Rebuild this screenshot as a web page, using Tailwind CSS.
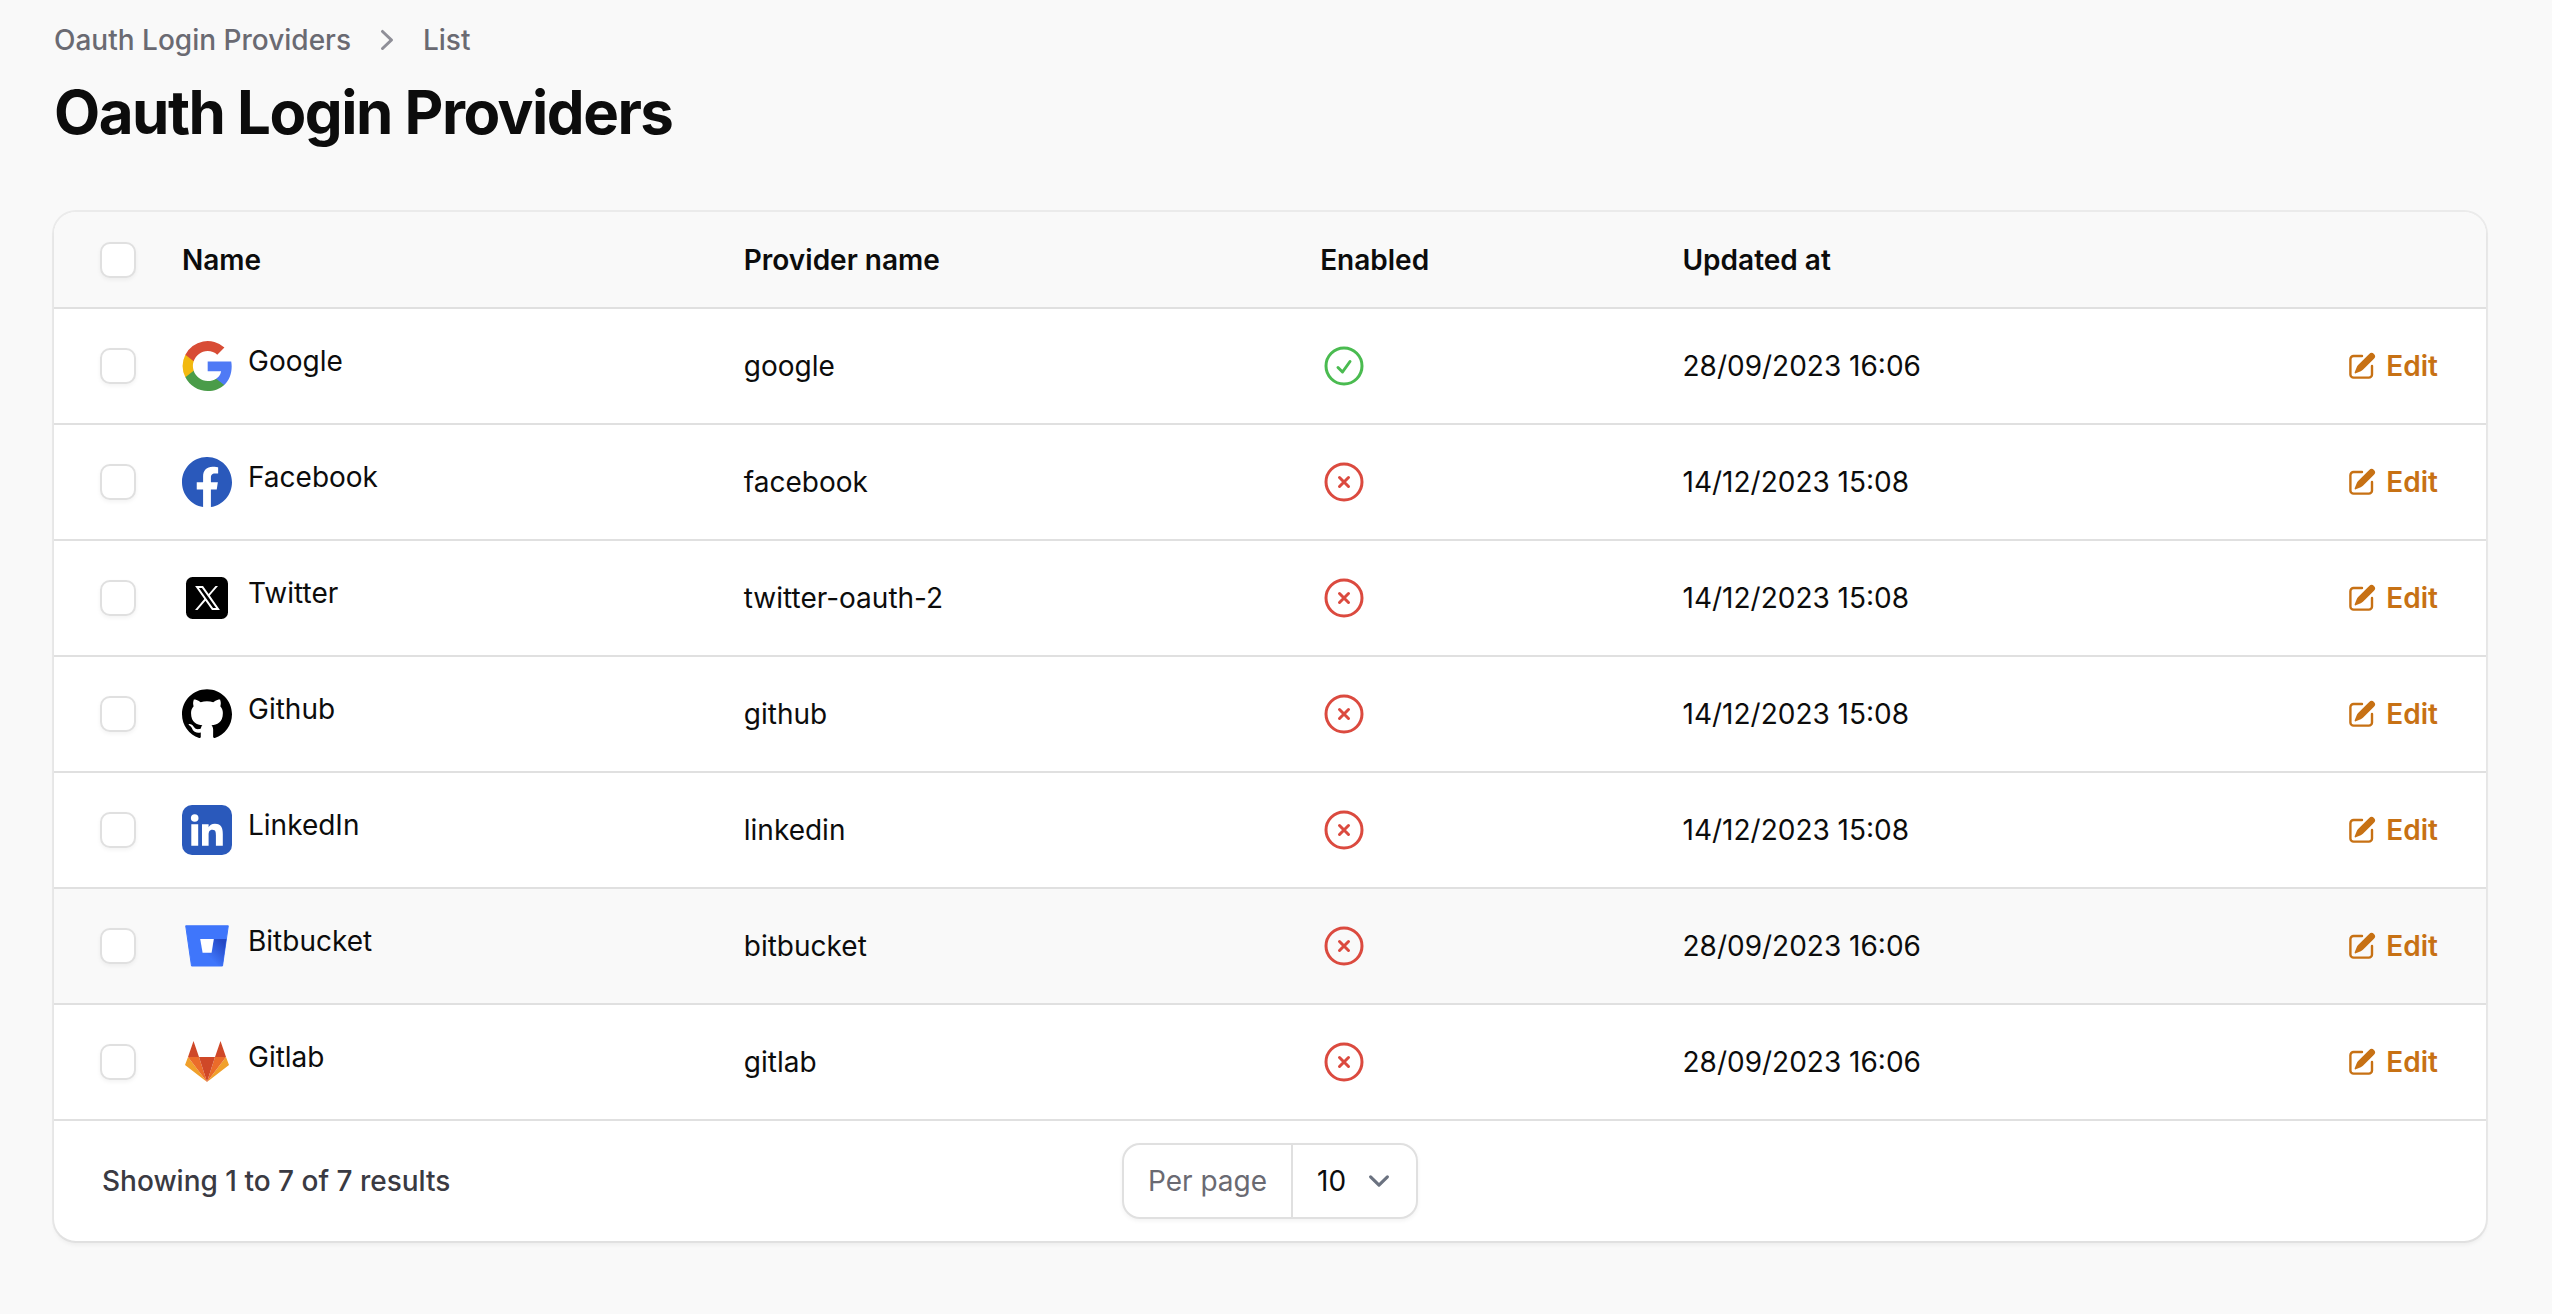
<!DOCTYPE html>
<html lang="en">
<head>
<meta charset="utf-8">
<meta name="viewport" content="width=device-width, initial-scale=1">
<title>Oauth Login Providers</title>
<script src="https://cdn.jsdelivr.net/npm/@tailwindcss/browser@4"></script>
</head>
<body class="min-h-screen bg-[#f9f9f9] font-['Inter',sans-serif] text-[28px] leading-10 text-[#0c0c0c]">
<svg class="absolute size-0" aria-hidden="true">
  <defs><linearGradient id="bb" x1="43" y1="20" x2="27" y2="36" gradientUnits="userSpaceOnUse"><stop offset=".1" stop-color="#2448c4"/><stop offset="1" stop-color="#3f76fb"/></linearGradient></defs>
  <symbol id="yes" viewBox="0 0 24 24"><path fill="none" stroke="currentColor" stroke-width="1.5" stroke-linecap="round" stroke-linejoin="round" d="M9 12.75L11.25 15 15 9.75M21 12a9 9 0 11-18 0 9 9 0 0118 0z"/></symbol>
  <symbol id="no" viewBox="0 0 24 24"><path fill="none" stroke="currentColor" stroke-width="1.5" stroke-linecap="round" stroke-linejoin="round" d="M9.75 9.75l4.5 4.5m0-4.5l-4.5 4.5M21 12a9 9 0 11-18 0 9 9 0 0118 0z"/></symbol>
  <symbol id="pencil" viewBox="0 0 20 20"><path fill="currentColor" d="M5.433 13.917l1.262-3.155A4 4 0 017.58 9.42l6.92-6.918a2.121 2.121 0 013 3l-6.92 6.918c-.383.383-.84.685-1.343.886l-3.154 1.262a.5.5 0 01-.65-.65z"/><path fill="currentColor" d="M3.5 5.75c0-.69.56-1.25 1.25-1.25H10A.75.75 0 0010 3H4.75A2.75 2.75 0 002 5.75v9.5A2.75 2.75 0 004.75 18h9.5A2.75 2.75 0 0017 15.25V10a.75.75 0 00-1.5 0v5.25c0 .69-.56 1.25-1.25 1.25h-9.5c-.69 0-1.25-.56-1.25-1.25v-9.5z"/></symbol>
  <symbol id="google" viewBox="0.7 1 22 22"><path fill="#4f7af5" d="M22.56 12.25c0-.78-.07-1.53-.2-2.25H12v4.26h5.92a5.06 5.06 0 0 1-2.2 3.32v2.77h3.57c2.08-1.92 3.27-4.74 3.27-8.1z"/><path fill="#4a9c49" d="M12 23c2.97 0 5.46-.98 7.28-2.66l-3.57-2.77c-.98.66-2.23 1.06-3.71 1.06-2.86 0-5.29-1.93-6.16-4.53H2.18v2.84A11 11 0 0 0 12 23z"/><path fill="#f2b90f" d="M5.84 14.1a6.6 6.6 0 0 1 0-4.2V7.06H2.18a11 11 0 0 0 0 9.88z"/><path fill="#d84c35" d="M12 5.38c1.62 0 3.06.56 4.21 1.64l3.15-3.15A11 11 0 0 0 2.18 7.06L5.84 9.9C6.71 7.31 9.14 5.38 12 5.38z"/></symbol>
  <symbol id="facebook" viewBox="0 0 16 16"><path fill="#2a59bb" d="M16 8.049c0-4.446-3.582-8.05-8-8.05C3.58 0-.002 3.603-.002 8.05c0 4.017 2.926 7.347 6.75 7.951v-5.625h-2.03V8.05H6.75V6.275c0-2.017 1.195-3.131 3.022-3.131.876 0 1.791.157 1.791.157v1.98h-1.009c-.993 0-1.303.621-1.303 1.258v1.51h2.218l-.354 2.326H9.25V16c3.824-.604 6.75-3.934 6.75-7.951z"/></symbol>
  <symbol id="twitter" viewBox="0 0 50 50"><rect x="4" y="4" width="42" height="42" rx="6.5"/><path fill="#fff" fill-rule="evenodd" d="M13.086 13h7.937l5.637 8.01L33.5 13H36l-8.21 9.613L37.914 37h-7.935l-6.541-9.293L15.5 37H13l9.309-10.896zM16.914 15l14.107 20h3.065L19.979 15z"/></symbol>
  <symbol id="github" viewBox="0 0.2 24 24"><path d="M12 .297c-6.63 0-12 5.373-12 12 0 5.303 3.438 9.8 8.205 11.385.6.113.82-.258.82-.577 0-.285-.01-1.04-.015-2.04-3.338.724-4.042-1.61-4.042-1.61C4.422 18.07 3.633 17.7 3.633 17.7c-1.087-.744.084-.729.084-.729 1.205.084 1.838 1.236 1.838 1.236 1.07 1.835 2.809 1.305 3.495.998.108-.776.417-1.305.76-1.605-2.665-.3-5.466-1.332-5.466-5.93 0-1.31.465-2.38 1.235-3.22-.135-.303-.54-1.523.105-3.176 0 0 1.005-.322 3.3 1.23.96-.267 1.98-.399 3-.405 1.02.006 2.04.138 3 .405 2.28-1.552 3.285-1.23 3.285-1.23.645 1.653.24 2.873.12 3.176.765.84 1.23 1.91 1.23 3.22 0 4.61-2.805 5.625-5.475 5.92.42.36.81 1.096.81 2.22 0 1.606-.015 2.896-.015 3.286 0 .315.21.69.825.57C20.565 22.092 24 17.592 24 12.297c0-6.627-5.373-12-12-12"/></symbol>
  <symbol id="linkedin" viewBox="0 0 50 50"><rect width="50" height="50" rx="10" fill="#2a59bb"/><g fill="#fff"><circle cx="12.7" cy="13" r="3.8"/><path d="M9.3 19.3H16.200v21.400H9.300zM20 19.300h6.600v2.900c.9-1.700 3-3.500 6.300-3.500 6.600 0 7.900 4.400 7.900 10.200v11.800h-6.900V30.200c0-2.500 0-5.500-3.400-5.500s-3.900 2.500-3.900 5.300v10.700H20z"/></g></symbol>
  <symbol id="bitbucket" viewBox="0 0 50 50"><path fill="#3f76fb" stroke="#3f76fb" stroke-linejoin="round" d="M3.700 4.800h42.600L40.500 45h-31z"/><path fill="url(#bb)" d="M44.400 18H31.800l-2.200 13.700h-9L10 45h30.500z"/><path fill="#fff" d="M18.200 18h13.600l-2.200 13.700h-9z"/></symbol>
  <symbol id="gitlab" viewBox="0 0 50 50"><path fill="#f0a02b" d="M3 28l3-8 19 25zM47 28l-3-8-19 25z"/><path fill="#eb6c2a" d="M6 20h11l8 25zM44 20H33l-8 25z"/><path fill="#cf4828" d="M17 20h16l-8 25zM6 20l5.500-16L17 20zM44 20L38.500 4 33 20z"/></symbol>
</svg>

<main class="pt-5 pr-[66px] pb-8 pl-[54px]">
  <header class="mb-16">
    <nav aria-label="Breadcrumb" class="flex items-center gap-4 font-medium text-[#6a6a72]">
      <a href="#">Oauth Login Providers</a>
      <svg class="size-10 text-[#8f8f98]" viewBox="0 0 20 20" fill="currentColor" aria-hidden="true"><path d="M7.210 14.770a.75.75 0 01.02-1.060L11.168 10 7.230 6.290a.75.75 0 111.040-1.080l4.500 4.250a.75.75 0 010 1.080l-4.500 4.250a.75.75 0 01-1.060-.02z"/></svg>
      <a href="#">List</a>
    </nav>
    <h1 class="mt-4 text-[60px] leading-[72px] font-bold tracking-tight">Oauth Login Providers</h1>
  </header>

  <section class="overflow-hidden rounded-[22px] bg-white shadow-[0_0_0_2px_rgba(9,9,11,0.06),0_4px_4px_rgba(0,0,0,0.05)]">
    <table class="w-full table-fixed text-left">
      <colgroup>
        <col class="w-[104px]"><col class="w-[23.1%]"><col class="w-[23.7%]"><col class="w-[14.9%]"><col><col class="w-[220px]">
      </colgroup>
      <thead>
        <tr class="h-24 border-b-2 border-[#e0e0e0] bg-[#f9f9f9]">
          <th class="pl-[46px]"><input type="checkbox" aria-label="Select all" class="block size-9 appearance-none rounded-[10px] border-2 border-[#e0e0e0] bg-white shadow-[0_2px_4px_rgba(0,0,0,0.05)]"></th>
          <th class="px-6 font-semibold">Name</th>
          <th class="px-6 font-semibold">Provider name</th>
          <th class="px-6 font-semibold">Enabled</th>
          <th class="px-6 font-semibold">Updated at</th>
          <th aria-label="Actions"></th>
        </tr>
      </thead>
      <tbody id="rows"></tbody>
    </table>
    <footer class="grid grid-cols-[1fr_auto_1fr] items-center px-12 py-[22px]">
      <p class="font-medium text-[#3a3a42]">Showing 1 to 7 of 7 results</p>
      <div class="flex h-[76px] items-stretch overflow-hidden rounded-[18px] border-2 border-[#e0e0e0] bg-white shadow-[0_2px_4px_rgba(0,0,0,0.05)]">
        <label for="per-page" class="flex items-center border-r-2 border-[#e0e0e0] px-6 text-[#6a6a72]">Per page</label>
        <div class="relative flex">
          <select id="per-page" class="w-[123px] appearance-none bg-transparent pl-6"><option>10</option><option>25</option><option>50</option></select>
          <svg class="pointer-events-none absolute top-1/2 right-4 size-[42px] -translate-y-1/2" viewBox="0 0 20 20" fill="none" stroke="#6b7280" stroke-width="1.5" stroke-linecap="round" stroke-linejoin="round" aria-hidden="true"><path d="M6 8l4 4 4-4"/></svg>
        </div>
      </div>
    </footer>
  </section>
</main>

<script>
  const providers = [
    ['Google', 'google', 'google', true, '28/09/2023 16:06'],
    ['Facebook', 'facebook', 'facebook', false, '14/12/2023 15:08'],
    ['Twitter', 'twitter-oauth-2', 'twitter', false, '14/12/2023 15:08'],
    ['Github', 'github', 'github', false, '14/12/2023 15:08'],
    ['LinkedIn', 'linkedin', 'linkedin', false, '14/12/2023 15:08'],
    ['Bitbucket', 'bitbucket', 'bitbucket', false, '28/09/2023 16:06'],
    ['Gitlab', 'gitlab', 'gitlab', false, '28/09/2023 16:06']
  ];
  document.getElementById('rows').innerHTML = providers.map(([name, slug, logo, enabled, updated]) => `
    <tr class="h-[116px] border-b-2 border-[#e0e0e0] ${name === 'Bitbucket' ? 'bg-[#f9f9f9]' : ''}">
      <td class="pl-[46px]"><input type="checkbox" aria-label="Select ${name}" class="block size-9 appearance-none rounded-[10px] border-2 border-[#e0e0e0] bg-white shadow-[0_2px_4px_rgba(0,0,0,0.05)]"></td>
      <td class="px-6"><div class="flex items-start gap-4"><svg class="size-[50px]" aria-hidden="true"><use href="#${logo}"/></svg><span>${name}</span></div></td>
      <td class="px-6">${slug}</td>
      <td class="px-6"><svg class="block size-12 ${enabled ? 'text-[#4abb50]' : 'text-[#db4a3f]'}" role="img" aria-label="${enabled ? 'Enabled' : 'Disabled'}"><use href="#${enabled ? 'yes' : 'no'}"/></svg></td>
      <td class="px-6">${updated}</td>
      <td class="pr-12"><a href="#" class="flex items-center justify-end gap-2 font-semibold text-[#c77114]"><svg class="size-8" aria-hidden="true"><use href="#pencil"/></svg>Edit</a></td>
    </tr>`).join('');
</script>
</body>
</html>
